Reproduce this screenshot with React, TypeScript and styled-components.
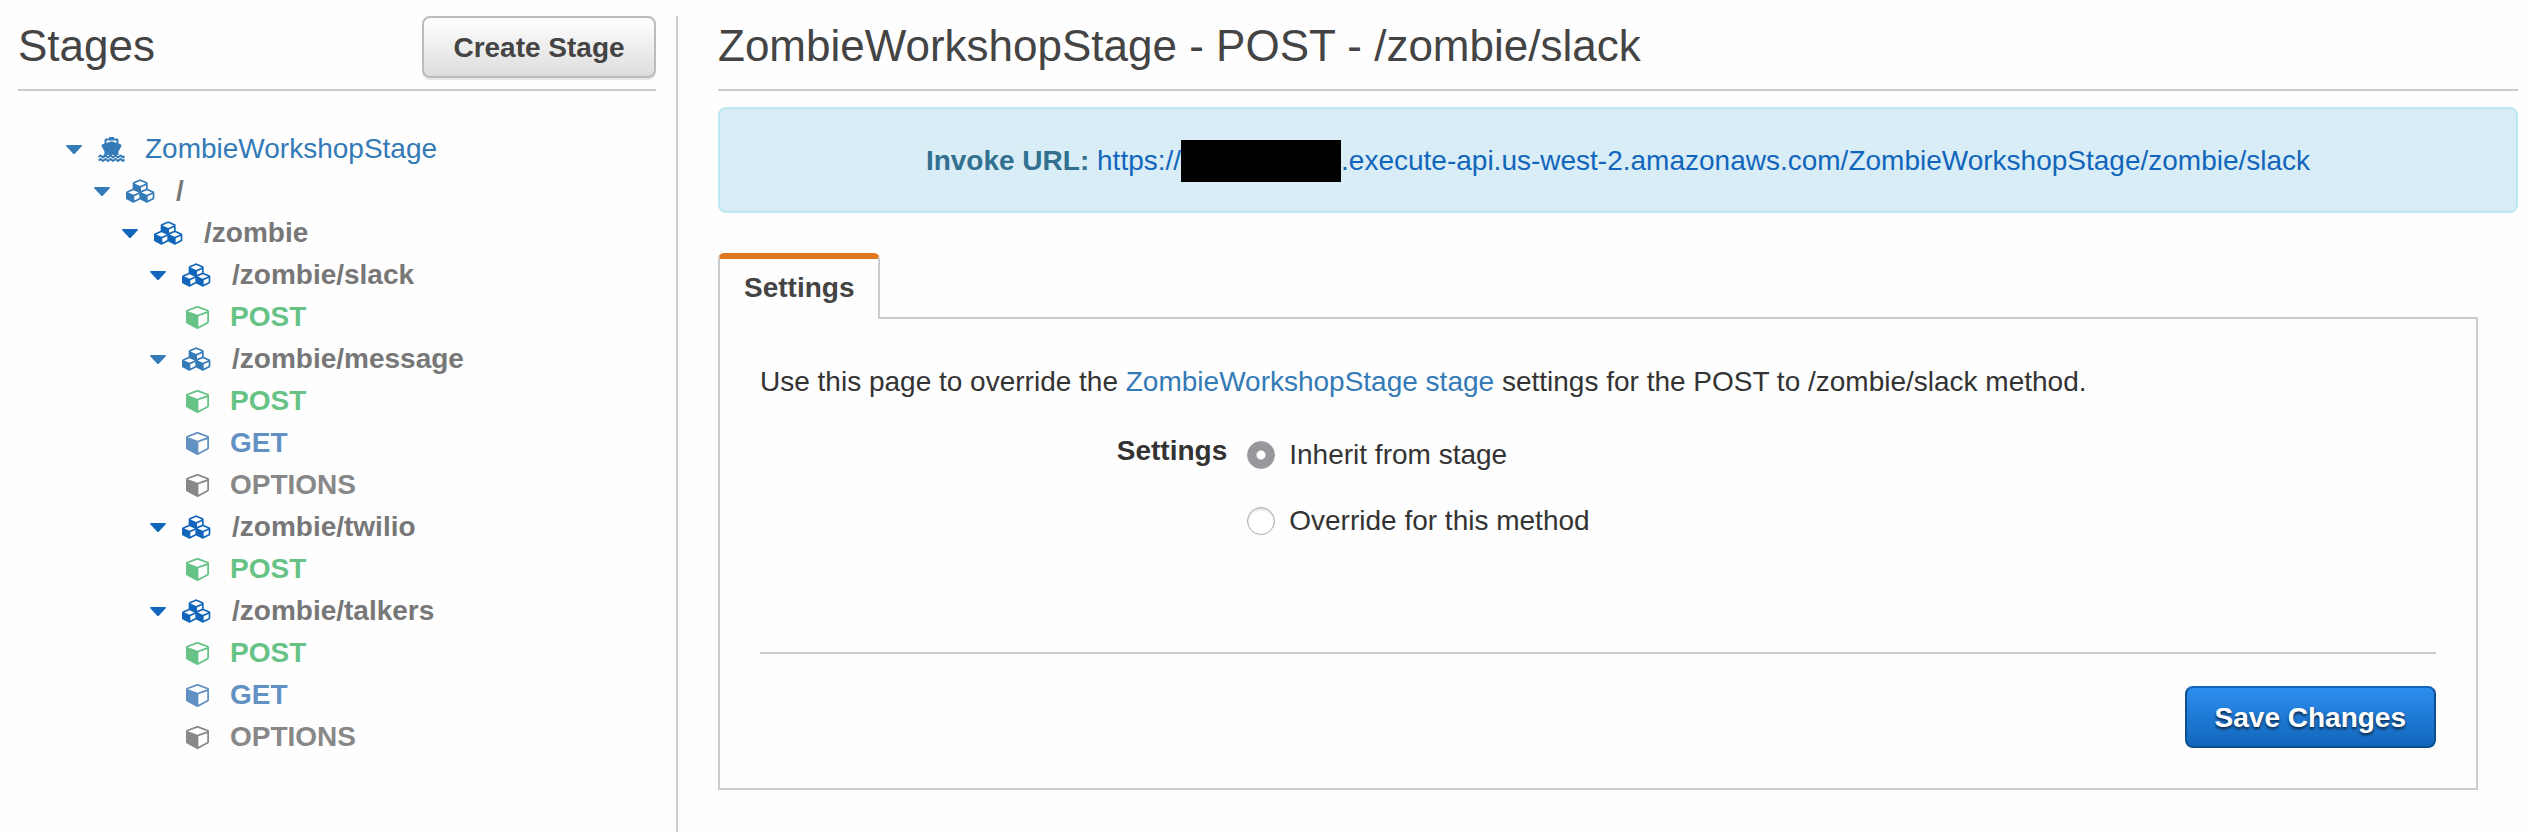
import React, { useState } from "react";
import styled, { createGlobalStyle } from "styled-components";

const GlobalStyle = createGlobalStyle`
  *, *::before, *::after { box-sizing: border-box; }
  html, body, #root { min-height: 100vh; }
  body {
    margin: 0;
    background: #fefefe;
    color: #333;
    font-family: "Liberation Sans", Arial, sans-serif;
    font-size: 28px;
    line-height: 42px;
  }
  #root { display: flex; }
`;

const Page = styled.div`
  flex: 1;
  display: flex;
  padding: 16px 14px 0 18px;
`;

const Sidebar = styled.aside`
  flex: 0 0 660px;
  padding-right: 20px;
  border-right: 2px solid #ccc;
`;

const Main = styled.main`
  flex: 1;
  min-width: 0;
  padding-left: 40px;
`;

const Header = styled.header`
  display: flex;
  align-items: flex-start;
  justify-content: space-between;
  height: 75px;
  border-bottom: 2px solid #ccc;
`;

const Title = styled.h1`
  margin: 0;
  padding-top: 4px;
  color: #444;
  font-size: 44px;
  font-weight: 400;
  line-height: 52px;
`;

const Button = styled.button<{ $primary?: boolean }>`
  height: 62px;
  min-width: 234px;
  padding: 2px 28px 0;
  border: 2px solid;
  border-color: ${(p) => (p.$primary ? "#1166bb #0d4e8e #0d4e8e" : "#bbb")};
  border-radius: 8px;
  background: ${(p) =>
    p.$primary
      ? "linear-gradient(#2e8eef, #1166bb)"
      : "linear-gradient(#fff, #ddd)"};
  box-shadow: ${(p) => (p.$primary ? "none" : "0 2px 0 #e6e6e6")};
  color: ${(p) => (p.$primary ? "#fff" : "#444")};
  text-shadow: ${(p) => (p.$primary ? "0 2px 3px rgba(0, 0, 0, 0.7)" : "none")};
  font: bold 28px/42px "Liberation Sans", Arial, sans-serif;
  cursor: pointer;
`;

const Tree = styled.ul`
  margin: 0;
  padding: 37px 0 0 48px;
  list-style: none;
`;

const TreeRow = styled.li<{ $level: number }>`
  display: flex;
  align-items: center;
  height: 42px;
  padding-left: ${(p) => p.$level * 28}px;
`;

const Toggle = styled.button<{ $color: string }>`
  display: flex;
  width: 32px;
  padding: 0;
  border: 0;
  background: none;
  color: ${(p) => p.$color};
`;

const IconSlot = styled.span<{ $color: string; $leaf?: boolean }>`
  display: flex;
  width: ${(p) => (p.$leaf ? 44 : 50)}px;
  margin-left: ${(p) => (p.$leaf ? 8 : 0)}px;
  color: ${(p) => p.$color};
`;

const StageIconSlot = styled(IconSlot)`
  width: 47px;
`;

const TreeLink = styled.a<{ $color: string; $plain?: boolean }>`
  color: ${(p) => p.$color};
  font-weight: ${(p) => (p.$plain ? 400 : 700)};
  text-decoration: none;
`;

const Link = styled.a<{ $deep?: boolean }>`
  color: ${(p) => (p.$deep ? "#1166bb" : "#337ab7")};
  text-decoration: none;
`;

const Banner = styled.div`
  margin-top: 16px;
  padding: 31px 30px 29px;
  border: 2px solid #bce8f1;
  border-radius: 8px;
  background: #d9edf7;
  color: #31708f;
  text-align: center;
`;

const Redacted = styled.span`
  display: inline-block;
  width: 160px;
  height: 42px;
  background: #000;
  vertical-align: top;
`;

const Tabs = styled.div`
  display: flex;
  margin-top: 40px;
`;

const Tab = styled.button`
  position: relative;
  height: 66px;
  margin-bottom: -2px;
  padding: 0 24px 2px;
  border: 2px solid #ccc;
  border-top: 6px solid #e07820;
  border-bottom: 0;
  border-radius: 6px 6px 0 0;
  background: #fefefe;
  color: #444;
  font: bold 28px/42px "Liberation Sans", Arial, sans-serif;
`;

const Panel = styled.section`
  margin-right: 40px;
  padding: 42px 40px 40px;
  border: 2px solid #ccc;
`;

const Intro = styled.p`
  margin: 0;
`;

const Field = styled.fieldset`
  display: grid;
  grid-template-columns: calc(28% - 2px) 1fr;
  column-gap: 20px;
  min-width: 0;
  min-height: 222px;
  margin: 27px 0 0;
  padding: 0;
  border: 0;
`;

const FieldLabel = styled.span`
  font-weight: 700;
  text-align: right;
`;

const Options = styled.div`
  display: flex;
  flex-direction: column;
  gap: 24px;
  padding-top: 4px;
`;

const Option = styled.label`
  display: flex;
  align-items: center;
  gap: 14px;
`;

const Radio = styled.input`
  appearance: none;
  width: 28px;
  height: 28px;
  margin: 0;
  border: 1px solid #aaa;
  border-radius: 50%;
  background: #fff;
  box-shadow: inset 0 2px 2px rgba(0, 0, 0, 0.12);
  &:checked {
    border-color: #98979c;
    background: radial-gradient(circle, #fff 4px, #98979c 5px);
    box-shadow: none;
  }
`;

const Actions = styled.div`
  display: flex;
  justify-content: flex-end;
  padding-top: 32px;
  border-top: 2px solid #ccc;
`;

const Caret = () => (
  <svg width="16" height="9" viewBox="0 0 16 9" fill="currentColor" aria-hidden="true">
    <path d="M1 0H15Q16.500 0 15.500 1.500L9 8.500Q8 9.500 7 8.500L.5 1.500Q-.5 0 1 0Z" />
  </svg>
);

const ShipIcon = () => (
  <svg width="27" height="25" viewBox="0 0 27 25" fill="currentColor" aria-hidden="true">
    <path d="M11 0H16V1.500H19Q20.500 1.500 20.500 3V6.500L22.500 7.300Q24 8 23.300 9.500L20.500 14.500V17L22 19L20 17.500L17.500 19.500L15 17.500L12.500 19.500L10 17.500L7.500 19.500L5 19L6.500 17V14.500L3.700 9.500Q3 8 4.500 7.300L6.500 6.500V3Q6.500 1.500 8 1.500H11ZM8.500 3.500V6L13.500 4.300L18.500 6V3.500Z" />
    <path d="M.5 20L2.500 18.500L5 20.500L7.500 18.500L10 20.500L12.500 18.500L15 20.500L17.500 18.500L20 20.500L22.500 18.500L25 20.500L26.500 19M.5 23.500L2.500 22L5 24L7.500 22L10 24L12.500 22L15 24L17.500 22L20 24L22.500 22L25 24L26.500 22.500" fill="none" stroke="currentColor" strokeWidth="1.900" />
  </svg>
);

const CubesIcon = () => (
  <svg width="30" height="24" viewBox="0 0 2304 1792" fill="currentColor" aria-hidden="true">
    <path d="M640 1632l384-192v-314l-384 164v342zm-64-454l404-173-404-173-404 173zm1088 454l384-192v-314l-384 164v342zm-64-454l404-173-404-173-404 173zm-448-293l384-165v-266l-384 164v267zm-64-379l441-189-441-189-441 189zm1088 518v416q0 36-19 67t-52 47l-448 224q-25 14-57 14t-57-14l-448-224q-4-2-7-4-2 2-7 4l-448 224q-25 14-57 14t-57-14l-448-224q-33-16-52-47t-19-67v-416q0-38 21.5-70t56.5-48l434-186v-400q0-38 21.5-70t56.5-48l448-192q23-10 50-10t50 10l448 192q35 16 56.5 48t21.5 70v400l434 186q36 16 57 48t21 70z" />
  </svg>
);

const CubeIcon = () => (
  <svg width="23" height="23" viewBox="0 128 1664 1664" fill="currentColor" aria-hidden="true">
    <path d="M896 1629l640-349v-636l-640 233v752zm-64-865l698-254-698-254-698 254zm832-252v768q0 35-18 65t-49 47l-704 384q-28 16-61 16t-61-16l-704-384q-31-17-49-47t-18-65v-768q0-40 23-73t61-47l704-256q22-8 44-8t44 8l704 256q38 14 61 47t23 73z" />
  </svg>
);

const LIGHT = "#337ab7";
const DEEP = "#1166bb";

const methodColors = { POST: "#67c285", GET: "#6191c2", OPTIONS: "#888" };
type Method = keyof typeof methodColors;

const resources: { path: string; level: number; color: string; methods: Method[] }[] = [
  { path: "/", level: 1, color: LIGHT, methods: [] },
  { path: "/zombie", level: 2, color: DEEP, methods: [] },
  { path: "/zombie/slack", level: 3, color: DEEP, methods: ["POST"] },
  { path: "/zombie/message", level: 3, color: LIGHT, methods: ["POST", "GET", "OPTIONS"] },
  { path: "/zombie/twilio", level: 3, color: DEEP, methods: ["POST"] },
  { path: "/zombie/talkers", level: 3, color: DEEP, methods: ["POST", "GET", "OPTIONS"] },
];

const StageTree = () => (
  <Tree>
    <TreeRow $level={0}>
      <Toggle type="button" $color={LIGHT} aria-label="Collapse ZombieWorkshopStage"><Caret /></Toggle>
      <StageIconSlot $color={LIGHT}><ShipIcon /></StageIconSlot>
      <TreeLink href="#stage" $color={LIGHT} $plain>ZombieWorkshopStage</TreeLink>
    </TreeRow>
    {resources.map((r) => (
      <React.Fragment key={r.path}>
        <TreeRow $level={r.level}>
          <Toggle type="button" $color={r.color} aria-label={`Collapse ${r.path}`}><Caret /></Toggle>
          <IconSlot $color={r.color}><CubesIcon /></IconSlot>
          <TreeLink href={`#${r.path}`} $color="#777">{r.path}</TreeLink>
        </TreeRow>
        {r.methods.map((m) => (
          <TreeRow key={m} $level={r.level + 1}>
            <IconSlot $color={methodColors[m]} $leaf><CubeIcon /></IconSlot>
            <TreeLink href={`#${r.path}/${m}`} $color={methodColors[m]}>{m}</TreeLink>
          </TreeRow>
        ))}
      </React.Fragment>
    ))}
  </Tree>
);

export default function App() {
  const [mode, setMode] = useState("inherit");
  return (
    <>
      <GlobalStyle />
      <Page>
        <Sidebar>
          <Header>
            <Title>Stages</Title>
            <Button type="button">Create Stage</Button>
          </Header>
          <StageTree />
        </Sidebar>
        <Main>
          <Header>
            <Title>ZombieWorkshopStage - POST - /zombie/slack</Title>
          </Header>
          <Banner>
            <strong>Invoke URL:</strong>{" "}
            <Link href="#invoke" $deep>
              https://<Redacted />.execute-api.us-west-2.amazonaws.com/ZombieWorkshopStage/zombie/slack
            </Link>
          </Banner>
          <Tabs role="tablist">
            <Tab type="button" role="tab" aria-selected="true">Settings</Tab>
          </Tabs>
          <Panel role="tabpanel">
            <Intro>
              Use this page to override the <Link href="#stage">ZombieWorkshopStage stage</Link> settings
              for the POST to /zombie/slack method.
            </Intro>
            <Field aria-labelledby="settings-label">
              <FieldLabel id="settings-label">Settings</FieldLabel>
              <Options>
                <Option>
                  <Radio type="radio" name="mode" checked={mode === "inherit"} onChange={() => setMode("inherit")} />
                  Inherit from stage
                </Option>
                <Option>
                  <Radio type="radio" name="mode" checked={mode === "override"} onChange={() => setMode("override")} />
                  Override for this method
                </Option>
              </Options>
            </Field>
            <Actions>
              <Button type="button" $primary>Save Changes</Button>
            </Actions>
          </Panel>
        </Main>
      </Page>
    </>
  );
}
